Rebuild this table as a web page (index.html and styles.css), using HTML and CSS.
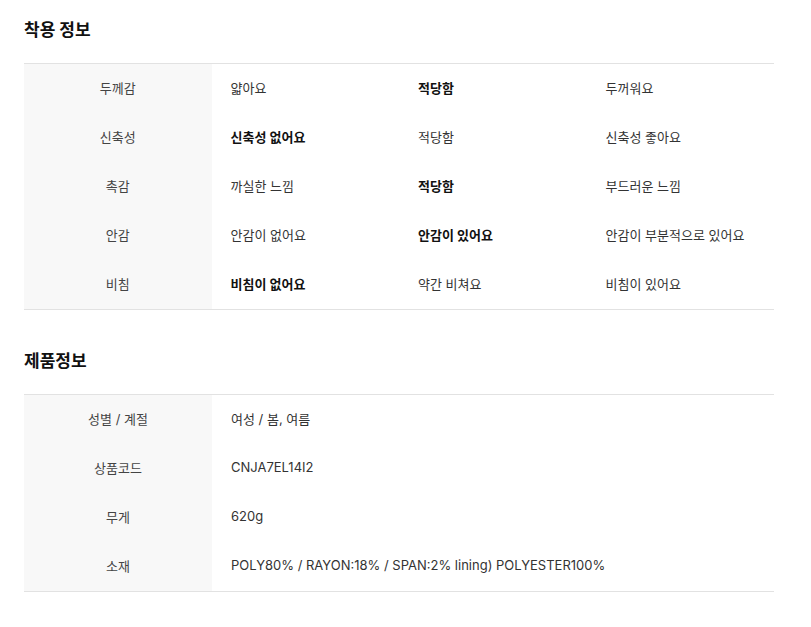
FILE: index.html
```html
<!DOCTYPE html>
<html lang="ko">
<head>
<meta charset="utf-8">
<link rel="stylesheet" href="styles.css">
</head>
<body>
<div class="page">
  <section class="section">
    <h2 class="title">착용 정보</h2>
    <div class="table fit">
      <div class="label">두께감</div><div class="cell">얇아요</div><div class="cell strong">적당함</div><div class="cell">두꺼워요</div>
      <div class="label">신축성</div><div class="cell strong">신축성 없어요</div><div class="cell">적당함</div><div class="cell">신축성 좋아요</div>
      <div class="label">촉감</div><div class="cell">까실한 느낌</div><div class="cell strong">적당함</div><div class="cell">부드러운 느낌</div>
      <div class="label">안감</div><div class="cell">안감이 없어요</div><div class="cell strong">안감이 있어요</div><div class="cell">안감이 부분적으로 있어요</div>
      <div class="label">비침</div><div class="cell strong">비침이 없어요</div><div class="cell">약간 비쳐요</div><div class="cell">비침이 있어요</div>
    </div>
  </section>
  <section class="section">
    <h2 class="title">제품정보</h2>
    <div class="table info">
      <div class="label">성별 / 계절</div><div class="cell">여성 / 봄, 여름</div>
      <div class="label">상품코드</div><div class="cell">CNJA7EL14I2</div>
      <div class="label">무게</div><div class="cell">620g</div>
      <div class="label">소재</div><div class="cell">POLY80% / RAYON:18% / SPAN:2% lining) POLYESTER100%</div>
    </div>
  </section>
</div>
</body>
</html>
```
FILE: styles.css
```css
* { box-sizing: border-box; }
body {
  margin: 0;
  background: #fff;
  font-family: "Inter", "Noto Sans CJK KR", sans-serif;
  color: #333;
}
.page {
  width: 750px;
  margin-left: 24px;
}
.section { padding-top: 17px; }
.section + .section { margin-top: 21px; }
.title {
  margin: 0 0 20px;
  font-size: 17px;
  line-height: 26px;
  font-weight: 700;
  color: #111;
}
.table {
  display: grid;
  border-top: 1px solid #e2e2e2;
  border-bottom: 1px solid #e2e2e2;
  grid-auto-rows: 49px;
  font-size: 13px;
}
.fit { grid-template-columns: repeat(4, 1fr); }
.info { grid-template-columns: 188px 1fr; }
.label {
  background: #f8f8f8;
  color: #444;
  display: flex;
  align-items: center;
  justify-content: center;
  padding-bottom: 3px;
}
.cell {
  display: flex;
  align-items: center;
  padding-left: 19px;
  padding-bottom: 3px;
  color: #333;
}
.strong { font-weight: 700; color: #111; }
```
